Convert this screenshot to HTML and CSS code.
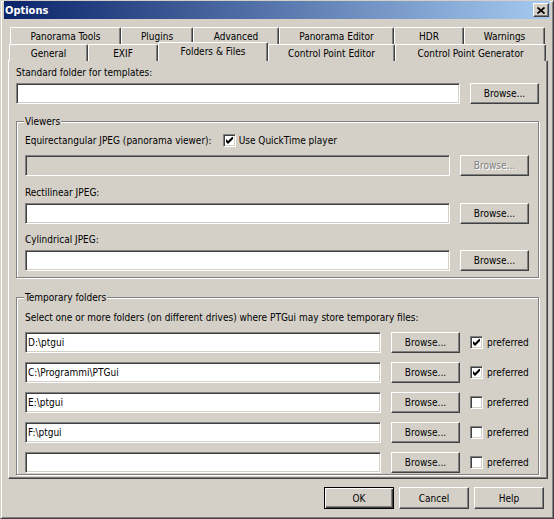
FILE: index.html
```html
<!DOCTYPE html>
<html>
<head>
    <title>Options</title>
    <meta charset="utf-8">
    <link rel="stylesheet" href="styles.css">
</head>
<body>
    <div class="window">
        <div class="titlebar">
            <span class="title">Options</span>
            <button class="close-button" title="Close">
                <svg width="8" height="7" viewBox="0 0 8 7"><path d="M0.5 0.5 L7.5 6.5 M7.5 0.5 L0.5 6.5" stroke="#000" stroke-width="1.7"/></svg>
            </button>
        </div>

        <!-- Two rows of tabs, the front row holds the selected one -->
        <div class="tab-row back">
            <div class="tab">Panorama Tools</div>
            <div class="tab">Plugins</div>
            <div class="tab">Advanced</div>
            <div class="tab">Panorama Editor</div>
            <div class="tab">HDR</div>
            <div class="tab">Warnings</div>
        </div>
        <div class="tab-row front">
            <div class="tab">General</div>
            <div class="tab">EXIF</div>
            <div class="tab active">Folders &amp; Files</div>
            <div class="tab">Control Point Editor</div>
            <div class="tab">Control Point Generator</div>
        </div>

        <div class="panel">
            <div class="label first">Standard folder for templates:</div>
            <div class="field-row">
                <input class="textbox" type="text" value="">
                <button class="button">Browse...</button>
            </div>

            <!-- Viewers -->
            <fieldset class="group viewers">
                <legend>Viewers</legend>
                <div class="check-row">
                    <span>Equirectangular JPEG (panorama viewer):</span>
                    <label class="check">
                        <span class="box"><svg width="7" height="7" viewBox="0 0 7 7"><path d="M0 2 L2 4 L7 -1 V2 L2 7 L0 5 Z" fill="#000"/></svg></span>
                        Use QuickTime player
                    </label>
                </div>
                <div class="field-row spaced">
                    <input class="textbox" type="text" value="" disabled>
                    <button class="button" disabled>Browse...</button>
                </div>
                <div class="label">Rectilinear JPEG:</div>
                <div class="field-row">
                    <input class="textbox" type="text" value="">
                    <button class="button">Browse...</button>
                </div>
                <div class="label tight">Cylindrical JPEG:</div>
                <div class="field-row">
                    <input class="textbox" type="text" value="">
                    <button class="button">Browse...</button>
                </div>
            </fieldset>

            <!-- Temporary folders -->
            <fieldset class="group temp">
                <legend>Temporary folders</legend>
                <div class="label">Select one or more folders (on different drives) where PTGui may store temporary files:</div>
                <div class="folder-list">
                    <div class="field-row">
                        <input class="textbox" type="text" value="D:\ptgui">
                        <button class="button">Browse...</button>
                        <label class="check pref">
                            <span class="box"><svg width="7" height="7" viewBox="0 0 7 7"><path d="M0 2 L2 4 L7 -1 V2 L2 7 L0 5 Z" fill="#000"/></svg></span>
                            preferred
                        </label>
                    </div>
                    <div class="field-row">
                        <input class="textbox" type="text" value="C:\Programmi\PTGui">
                        <button class="button">Browse...</button>
                        <label class="check pref">
                            <span class="box"><svg width="7" height="7" viewBox="0 0 7 7"><path d="M0 2 L2 4 L7 -1 V2 L2 7 L0 5 Z" fill="#000"/></svg></span>
                            preferred
                        </label>
                    </div>
                    <div class="field-row">
                        <input class="textbox" type="text" value="E:\ptgui">
                        <button class="button">Browse...</button>
                        <label class="check pref"><span class="box"></span>preferred</label>
                    </div>
                    <div class="field-row">
                        <input class="textbox" type="text" value="F:\ptgui">
                        <button class="button">Browse...</button>
                        <label class="check pref"><span class="box"></span>preferred</label>
                    </div>
                    <div class="field-row">
                        <input class="textbox" type="text" value="">
                        <button class="button">Browse...</button>
                        <label class="check pref"><span class="box"></span>preferred</label>
                    </div>
                </div>
            </fieldset>
        </div>

        <div class="dialog-buttons">
            <button class="button default">OK</button>
            <button class="button">Cancel</button>
            <button class="button">Help</button>
        </div>
    </div>
</body>
</html>
```

FILE: styles.css
```css
body {
    margin: 0;
    background: #d4d0c8;
    font-family: "DejaVu Sans Condensed", "DejaVu Sans", sans-serif;
    font-size: 10px;
    color: #000;
}
.window {
    width: 554px;
    height: 519px;
    box-sizing: border-box;
    border: 1px solid;
    border-color: #d4d0c8 #404040 #404040 #d4d0c8;
    box-shadow: inset 1px 1px #fff, inset -1px -1px #808080;
    padding: 0 3px;
}
.titlebar {
    height: 18px;
    background: linear-gradient(to right, #0a246a, #a6caf0);
    display: flex;
    align-items: center;
    justify-content: space-between;
    padding: 0 1px 0 1px;
}
.title {
    color: #fff;
    font-weight: bold;
    font-size: 11px;
}
.close-button {
    width: 16px;
    height: 14px;
    padding: 0;
    background: #d4d0c8;
    border: 1px solid;
    border-color: #fff #404040 #404040 #fff;
    box-shadow: inset -1px -1px #808080;
    display: flex;
    align-items: center;
    justify-content: center;
}

/* tabs */
.tab-row {
    display: grid;
}
.tab-row.back {
    margin: 8px 0 0 6px;
    height: 17px;
    grid-template-columns: 111px 72px 86px 115px 70px 81px;
}
.tab-row.front {
    margin-left: 5px;
    height: 16px;
    grid-template-columns: 79px 70px 110px 127px 151px;
}
.tab {
    box-sizing: border-box;
    background: #d4d0c8;
    border-top: 1px solid #fff;
    border-left: 1px solid #fff;
    border-right: 1px solid #404040;
    box-shadow: inset -1px 0 #808080;
    border-radius: 2px 2px 0 0;
    display: flex;
    align-items: center;
    justify-content: center;
    white-space: nowrap;
}
.tab.active {
    height: 19px;
    margin-top: -2px;
    padding-bottom: 2px;
    z-index: 1;
}

/* page */
.panel {
    margin-left: 4px;
    width: 540px;
    height: 419px;
    box-sizing: border-box;
    border: 1px solid;
    border-color: #fff #404040 #404040 #fff;
    box-shadow: inset -1px -1px #808080;
    padding: 0 8px 0 7px;
}
.label {
    line-height: 13px;
    white-space: nowrap;
}
.label.first {
    margin-top: 5px;
}
.field-row {
    display: flex;
    align-items: center;
    gap: 10px;
    margin-top: 4px;
}
.field-row.spaced {
    margin-top: 8px;
}
.field-row + .label {
    margin-top: 10px;
}
.field-row + .label.tight {
    margin-top: 9px;
}
.textbox {
    flex: 1;
    min-width: 0;
    height: 21px;
    box-sizing: border-box;
    margin: 0;
    padding: 0 2px;
    font: inherit;
    color: #000;
    background: #fff;
    border: 1px solid;
    border-color: #808080 #fff #fff #808080;
    box-shadow: inset 1px 1px #404040, inset -1px -1px #d4d0c8;
    outline: none;
}
.textbox:disabled {
    background: #d4d0c8;
}
.button {
    width: 69px;
    height: 21px;
    box-sizing: border-box;
    margin: 0;
    padding: 0;
    font: inherit;
    color: #000;
    background: #d4d0c8;
    border: 1px solid;
    border-color: #fff #404040 #404040 #fff;
    box-shadow: inset -1px -1px #808080;
}
.button:disabled {
    color: #808080;
    text-shadow: 1px 1px #fff;
}

/* group boxes */
.group {
    margin: 0;
    padding: 0 9px 0 8px;
    border: 1px solid #808080;
    box-shadow: inset 1px 1px #fff, 1px 1px #fff;
    min-width: 0;
}
.group legend {
    padding: 0 1px;
    margin-left: -1px;
    line-height: 13px;
    background: #d4d0c8;
}
.group.viewers {
    margin-top: 11px;
    padding-top: 6px;
    padding-bottom: 6px;
}
.group.temp {
    margin-top: 13px;
    padding-top: 7px;
    padding-bottom: 1px;
}
.check-row {
    display: flex;
    align-items: center;
    height: 13px;
    gap: 11px;
    white-space: nowrap;
}
.check {
    display: flex;
    align-items: center;
    gap: 3px;
    white-space: nowrap;
}
.check.pref {
    width: 59px;
    gap: 4px;
}
.box {
    width: 13px;
    height: 13px;
    box-sizing: border-box;
    flex: none;
    background: #fff;
    border: 1px solid;
    border-color: #808080 #fff #fff #808080;
    box-shadow: inset 1px 1px #404040, inset -1px -1px #d4d0c8;
    display: flex;
    align-items: center;
    justify-content: center;
}
.folder-list {
    display: flex;
    flex-direction: column;
    gap: 9px;
    margin-top: 8px;
}
.folder-list .field-row {
    margin-top: 0;
}

/* bottom buttons */
.dialog-buttons {
    display: flex;
    justify-content: flex-end;
    gap: 5px;
    margin: 8px 6px 0 0;
}
.dialog-buttons .button {
    width: 70px;
    height: 22px;
}
.button.default {
    border: 1px solid #000;
    box-shadow: inset 1px 1px #fff, inset -1px -1px #404040, inset -2px -2px #808080;
}
```
